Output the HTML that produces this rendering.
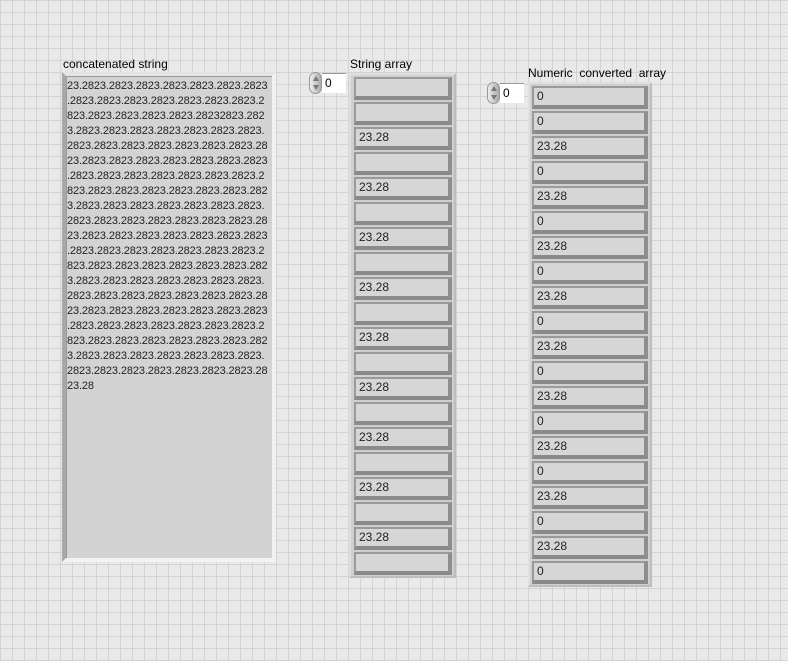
<!DOCTYPE html>
<html><head><style>
body{margin:0;width:788px;height:661px;overflow:hidden;background-color:#e9e9e9;
background-image:linear-gradient(to right,#d3d3d3 1px,transparent 1px),linear-gradient(to bottom,#d3d3d3 1px,transparent 1px);
background-size:12px 12px;background-position:0 0;font-family:"Liberation Sans",sans-serif;position:relative}
.lbl{position:absolute;font-size:12px;color:#000;white-space:nowrap}
.str{position:absolute;left:62px;top:72px;width:214px;height:490px;box-sizing:border-box;background:#d3d3d3;
border-top:4px solid #e4e4e4;border-left:4px solid #a8a8a8;border-right:4px solid #f2f2f2;border-bottom:4px solid #f2f2f2;
box-shadow:inset 1px 1px 0 #9a9a9a}
.str pre{margin:0;padding:3px 0 0 1px;font-family:"Liberation Sans",sans-serif;font-size:11px;letter-spacing:-0.12px;line-height:15px;color:#222}
.arr{position:absolute;box-sizing:border-box;background:#cfcfcf;border:2px solid #e0e0e0;border-right-color:#bdbdbd;border-bottom-color:#bdbdbd}
.el{position:absolute;box-sizing:border-box;height:23px;background:#d6d6d6;
border-top:2px solid #9a9a9a;border-left:2px solid #9a9a9a;border-right:4px solid #8e8e8e;border-bottom:4px solid #8a8a8a;
font-size:12px;line-height:17px;padding-left:3px;color:#222}
.idx{position:absolute;height:24px}
.spin{position:absolute;left:0;top:1px;width:13px;height:22px;border-radius:7px;background:linear-gradient(to right,#eee,#aaa);border:1px solid #999;box-sizing:border-box}
.spin:before{content:"";position:absolute;left:3px;top:3px;border-left:3px solid transparent;border-right:3px solid transparent;border-bottom:5px solid #777}
.spin:after{content:"";position:absolute;left:3px;bottom:3px;border-left:3px solid transparent;border-right:3px solid transparent;border-top:5px solid #777}
.box{position:absolute;left:13px;top:2px;width:24px;height:20px;background:#fff;border-top:1px solid #999;font-size:12px;line-height:19px;padding-left:3px;box-sizing:border-box}
</style></head><body>
<div class="lbl" style="left:63px;top:57px">concatenated string</div>
<div class="str"><pre>23.2823.2823.2823.2823.2823.2823.2823
.2823.2823.2823.2823.2823.2823.2823.2
823.2823.2823.2823.2823.28232823.282
3.2823.2823.2823.2823.2823.2823.2823.
2823.2823.2823.2823.2823.2823.2823.28
23.2823.2823.2823.2823.2823.2823.2823
.2823.2823.2823.2823.2823.2823.2823.2
823.2823.2823.2823.2823.2823.2823.282
3.2823.2823.2823.2823.2823.2823.2823.
2823.2823.2823.2823.2823.2823.2823.28
23.2823.2823.2823.2823.2823.2823.2823
.2823.2823.2823.2823.2823.2823.2823.2
823.2823.2823.2823.2823.2823.2823.282
3.2823.2823.2823.2823.2823.2823.2823.
2823.2823.2823.2823.2823.2823.2823.28
23.2823.2823.2823.2823.2823.2823.2823
.2823.2823.2823.2823.2823.2823.2823.2
823.2823.2823.2823.2823.2823.2823.282
3.2823.2823.2823.2823.2823.2823.2823.
2823.2823.2823.2823.2823.2823.2823.28
23.28</pre></div>

<div class="lbl" style="left:350px;top:57px">String array</div>
<div class="idx" style="left:309px;top:71px"><div class="spin"></div><div class="box">0</div></div>
<div class="arr" style="left:349px;top:73px;width:107px;height:505px"></div>

<div class="lbl" style="left:528px;top:66px">Numeric&nbsp; converted&nbsp; array</div>
<div class="idx" style="left:487px;top:81px"><div class="spin"></div><div class="box">0</div></div>
<div class="arr" style="left:528px;top:82px;width:124px;height:505px"></div>

<script>
for(let i=0;i<20;i++){
 let a=document.createElement('div');a.className='el';
 a.style.cssText='left:354px;top:'+(77+25*i)+'px;width:98px';
 a.textContent=(i>=2&&i%2==0)?'23.28':'';document.body.appendChild(a);
 let b=document.createElement('div');b.className='el';
 b.style.cssText='left:532px;top:'+(86+25*i)+'px;width:116px';
 b.textContent=(i>=2&&i%2==0)?'23.28':'0';document.body.appendChild(b);
}
</script>
</body></html>
